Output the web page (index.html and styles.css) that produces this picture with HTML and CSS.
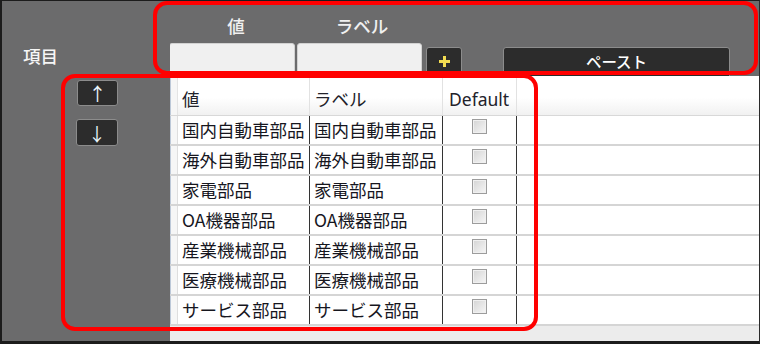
FILE: index.html
```html
<!DOCTYPE html>
<html lang="ja">
<head>
<meta charset="utf-8">
<title>項目</title>
<link rel="stylesheet" href="styles.css">
</head>
<body>
<div class="frame">
  <aside class="side">
    <div class="side-label">項目</div>
    <div class="move-btns">
      <button class="move-btn up" type="button">↑</button>
      <button class="move-btn down" type="button">↓</button>
    </div>
  </aside>
  <main class="main">
    <section class="entry">
      <div class="entry-labels">
        <span class="lbl lbl-value">値</span>
        <span class="lbl lbl-label">ラベル</span>
      </div>
      <div class="entry-row">
        <input class="field field-value" type="text">
        <input class="field field-label" type="text">
        <button class="btn-add" type="button" aria-label="追加">
          <svg width="11" height="11" viewBox="0 0 11 11"><path d="M4 0h3v4h4v3H7v4H4V7H0V4h4z" fill="#f2dc52"/></svg>
        </button>
        <button class="btn-paste" type="button">ペースト</button>
      </div>
    </section>
    <section class="grid">
      <div class="row head">
        <div class="rh"></div>
        <div class="c c1">値</div>
        <div class="c c2">ラベル</div>
        <div class="c c3 def">Default</div>
        <div class="c rest"></div>
      </div>
      <div class="row"><div class="rh"></div><div class="c c1">国内自動車部品</div><div class="c c2">国内自動車部品</div><div class="c c3"><span class="chk"></span></div><div class="c rest"></div></div>
      <div class="row"><div class="rh"></div><div class="c c1">海外自動車部品</div><div class="c c2">海外自動車部品</div><div class="c c3"><span class="chk"></span></div><div class="c rest"></div></div>
      <div class="row"><div class="rh"></div><div class="c c1">家電部品</div><div class="c c2">家電部品</div><div class="c c3"><span class="chk"></span></div><div class="c rest"></div></div>
      <div class="row"><div class="rh"></div><div class="c c1">OA機器部品</div><div class="c c2">OA機器部品</div><div class="c c3"><span class="chk"></span></div><div class="c rest"></div></div>
      <div class="row"><div class="rh"></div><div class="c c1">産業機械部品</div><div class="c c2">産業機械部品</div><div class="c c3"><span class="chk"></span></div><div class="c rest"></div></div>
      <div class="row"><div class="rh"></div><div class="c c1">医療機械部品</div><div class="c c2">医療機械部品</div><div class="c c3"><span class="chk"></span></div><div class="c rest"></div></div>
      <div class="row"><div class="rh"></div><div class="c c1">サービス部品</div><div class="c c2">サービス部品</div><div class="c c3"><span class="chk"></span></div><div class="c rest"></div></div>
      <div class="grid-foot"></div>
    </section>
  </main>
  <div class="mark mark-top"></div>
  <div class="mark mark-table"></div>
</div>
</body>
</html>
```

FILE: styles.css
```css
* { box-sizing: border-box; }
html, body { margin: 0; padding: 0; background: #ffffff; }
body {
  font-family: "Noto Sans CJK JP", "Noto Sans", sans-serif;
  width: 760px;
  height: 344px;
  overflow: hidden;
}
.frame {
  position: relative;
  width: 760px;
  height: 344px;
  display: flex;
  background: #6b6b6c;
  border-left: 2px solid #1c1c1c;
  border-top: 1px solid #1c1c1c;
  border-bottom: 3px solid #1c1c1c;
  border-right: 1px solid #2a2a2a;
}
.side {
  width: 168px;
  flex: none;
  display: flex;
  flex-direction: column;
  padding: 44px 0 0 21px;
}
.side-label {
  color: #f6f6f6;
  font-size: 17.5px;
  font-weight: 500;
  line-height: 22px;
  height: 22px;
}
.move-btns {
  display: flex;
  flex-direction: column;
  gap: 13px;
  margin: 13px 0 0 53px;
}
.move-btn {
  width: 42px;
  height: 27px;
  margin: 0;
  padding: 0;
  background: #2c2c2c;
  border: 1px solid #8c8c8c;
  border-radius: 3px;
  color: #eaf6fc;
  font-family: "Noto Sans CJK JP", sans-serif;
  font-size: 18px;
  line-height: 24px;
  text-align: center;
}
.move-btn.up { height: 26px; margin-left: 1px; width: 41px; }
.main {
  flex: 1;
  display: flex;
  flex-direction: column;
  min-width: 0;
}
.entry {
  height: 75px;
  flex: none;
  overflow: hidden;
  padding-top: 14px;
}
.entry-labels {
  display: flex;
  height: 22px;
  gap: 2px;
}
.lbl {
  color: #f0f0f0;
  font-size: 17.5px;
  font-weight: 500;
  line-height: 22px;
  text-align: center;
}
.lbl-value { width: 126px; padding-left: 6px; }
.lbl-label { width: 125px; padding-left: 3px; }
.entry-row {
  display: flex;
  align-items: flex-start;
  margin-top: 6px;
}
.field {
  height: 34px;
  margin: 0;
  padding: 0;
  background: #f0f0f0;
  border: 1px solid #d2d2d2;
  border-radius: 3px 3px 0 0;
  outline: none;
}
.field-value { width: 126px; margin-left: -1px; }
.field-label { width: 125px; margin-left: 2px; }
.btn-add {
  width: 36px;
  height: 32px;
  margin: 4px 0 0 4px;
  padding: 0 0 4px 0;
  background: #2c2c2c;
  border: 1px solid #8c8c8c;
  border-radius: 3px;
  display: flex;
  align-items: center;
  justify-content: center;
}
.btn-paste {
  width: 227px;
  height: 32px;
  margin: 4px 0 0 41px;
  padding: 0 0 5px 0;
  background: #2c2c2c;
  border: 1px solid #8c8c8c;
  border-radius: 3px;
  color: #ffffff;
  font-family: "Noto Sans CJK JP", sans-serif;
  font-size: 15.5px;
  font-weight: 500;
  line-height: 24px;
  text-align: center;
}
.grid {
  flex: 1;
  display: flex;
  flex-direction: column;
  background: #ffffff;
  min-height: 0;
}
.row {
  display: flex;
  height: 30px;
  flex: none;
  border-bottom: 2px solid #d5d5d5;
  color: #16161e;
  font-size: 17.5px;
}
.row.head {
  height: 40px;
  border-bottom: 1px solid #d8d8d8;
  background: linear-gradient(#ffffff 0%, #ffffff 55%, #f1f1f1 100%);
  color: #22222a;
  padding-top: 6px;
}
.rh {
  width: 8px;
  flex: none;
  background: #f6f6f6;
  border-left: 1px solid #bcc8d8;
  border-right: 1px solid #dedede;
}
.row.head .rh { border-right: 1px solid #e4e4e4; margin-top: -6px; }
.c {
  flex: none;
  display: flex;
  align-items: center;
  white-space: nowrap;
  overflow: hidden;
  line-height: 28px;
}
.c1 { width: 132px; padding-left: 4px; border-right: 1px solid #333333; }
.c2 { width: 133px; padding-left: 4px; border-right: 1px solid #333333; }
.c3 { width: 74px; border-right: 1px solid #333333; justify-content: center; align-items: flex-start; padding-top: 3px; }
.rest { flex: 1; }
.row.head .c { border-right-color: #e2e2e2; margin-top: -6px; padding-top: 6px; }
.row.head .c3 { align-items: center; justify-content: flex-start; padding-left: 6px; font-family: "Noto Sans", sans-serif; font-size: 17.5px; }
.chk {
  display: block;
  width: 15px;
  height: 15px;
  border: 1px solid #9c9c9c;
  background: linear-gradient(135deg, #d4d4d4 0%, #f6f6f6 100%);
  box-shadow: inset 0 0 0 1px #f0f0f0;
}
.grid-foot {
  flex: 1;
  background: #ececec;
}
.mark {
  position: absolute;
  border: 4px solid #ff0000;
  border-radius: 14px;
  pointer-events: none;
}
.mark-top { left: 151px; top: 0; width: 605px; height: 74px; }
.mark-table { left: 59px; top: 73px; width: 477px; height: 257px; }
```
